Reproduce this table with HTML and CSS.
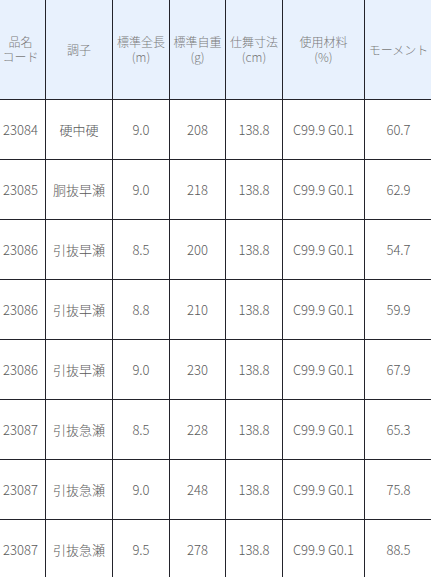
FILE: index.html
```html
<!DOCTYPE html>
<html lang="ja">
<head>
<meta charset="utf-8">
<link rel="stylesheet" href="styles.css">
</head>
<body>
<table class="spec">
  <colgroup>
    <col class="c1"><col class="c2"><col class="c3"><col class="c4"><col class="c5"><col class="c6"><col class="c7">
  </colgroup>
  <thead>
    <tr>
      <th>品名<br>コード</th>
      <th>調子</th>
      <th>標準全長<br>(m)</th>
      <th>標準自重<br>(g)</th>
      <th>仕舞寸法<br>(cm)</th>
      <th>使用材料<br>(%)</th>
      <th>モーメント</th>
    </tr>
  </thead>
  <tbody>
    <tr><td>23084</td><td>硬中硬</td><td>9.0</td><td>208</td><td>138.8</td><td>C99.9 G0.1</td><td>60.7</td></tr>
    <tr><td>23085</td><td>胴抜早瀬</td><td>9.0</td><td>218</td><td>138.8</td><td>C99.9 G0.1</td><td>62.9</td></tr>
    <tr><td>23086</td><td>引抜早瀬</td><td>8.5</td><td>200</td><td>138.8</td><td>C99.9 G0.1</td><td>54.7</td></tr>
    <tr><td>23086</td><td>引抜早瀬</td><td>8.8</td><td>210</td><td>138.8</td><td>C99.9 G0.1</td><td>59.9</td></tr>
    <tr><td>23086</td><td>引抜早瀬</td><td>9.0</td><td>230</td><td>138.8</td><td>C99.9 G0.1</td><td>67.9</td></tr>
    <tr><td>23087</td><td>引抜急瀬</td><td>8.5</td><td>228</td><td>138.8</td><td>C99.9 G0.1</td><td>65.3</td></tr>
    <tr><td>23087</td><td>引抜急瀬</td><td>9.0</td><td>248</td><td>138.8</td><td>C99.9 G0.1</td><td>75.8</td></tr>
    <tr><td>23087</td><td>引抜急瀬</td><td>9.5</td><td>278</td><td>138.8</td><td>C99.9 G0.1</td><td>88.5</td></tr>
  </tbody>
</table>
</body>
</html>
```
FILE: styles.css
```css
html, body {
  margin: 0;
  padding: 0;
  background: #fff;
  overflow: hidden;
}
.spec {
  border-collapse: collapse;
  table-layout: fixed;
  width: 437px;
  margin-left: -5px;
  font-family: "Noto Sans CJK JP", "Noto Sans", sans-serif;
  color: #555;
}
.c1 { width: 50px; }
.c2 { width: 67px; }
.c3 { width: 57px; }
.c4 { width: 56px; }
.c5 { width: 57px; }
.c6 { width: 82px; }
.c7 { width: 68px; }
.spec th, .spec td {
  border: 1px solid #23232b;
  text-align: center;
  vertical-align: middle;
  padding: 0;
  white-space: nowrap;
}
.spec thead tr { height: 99px; }
.spec th {
  border-top: none;
  background: #e8f1fd;
  font-weight: 300;
  font-size: 12px;
  line-height: 15px;
  color: #7a7a7a;
}
.spec tbody tr { height: 60px; }
.spec td {
  font-size: 13px;
  font-weight: 300;
  color: #5a5a5a;
}
```
